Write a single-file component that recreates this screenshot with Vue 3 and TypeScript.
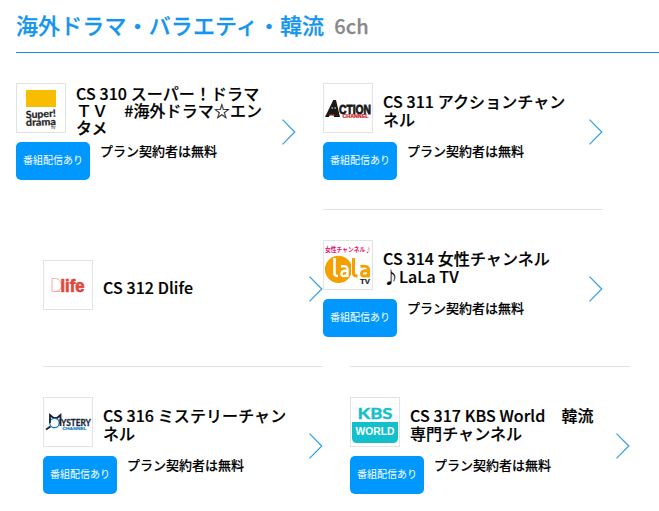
<script setup lang="ts">
type Logo = 'drama' | 'action' | 'dlife' | 'lala' | 'mystery' | 'kbs'

interface Channel {
  logo: Logo
  title: string
  streaming: boolean
}

const rows: { name: string; channels: Channel[] }[] = [
  {
    name: 'first',
    channels: [
      { logo: 'drama', title: 'CS 310 スーパー！ドラマＴＶ　#海外ドラマ☆エンタメ', streaming: true },
      { logo: 'action', title: 'CS 311 アクションチャンネル', streaming: true },
    ],
  },
  {
    name: 'second',
    channels: [
      { logo: 'dlife', title: 'CS 312 Dlife', streaming: false },
      { logo: 'lala', title: 'CS 314 女性チャンネル♪LaLa TV', streaming: true },
    ],
  },
  {
    name: 'third',
    channels: [
      { logo: 'mystery', title: 'CS 316 ミステリーチャンネル', streaming: true },
      { logo: 'kbs', title: 'CS 317 KBS World　韓流専門チャンネル', streaming: true },
    ],
  },
]
</script>

<template>
  <section class="genre">
    <h2 class="heading">海外ドラマ・バラエティ・韓流<span class="count">6ch</span></h2>
    <div v-for="row in rows" :key="row.name" class="row" :class="row.name">
      <a v-for="ch in row.channels" :key="ch.logo" class="card" :class="ch.logo">
        <div class="body">
          <div class="head">
            <div class="logo">
              <svg v-if="ch.logo === 'drama'" viewBox="0 0 48 48">
                <rect x="9" y="6" width="30" height="17" fill="#f9bd00" />
                <g class="round" fill="#222" stroke="#222" stroke-width=".25" font-size="10">
                  <text x="9" y="33.500" textLength="30" lengthAdjust="spacingAndGlyphs" transform="rotate(-3 24 33)">Super!</text>
                  <text x="9" y="41.500" textLength="30" lengthAdjust="spacingAndGlyphs" transform="rotate(-2 24 41)">drama</text>
                </g>
                <text class="round" x="34" y="44.500" font-size="3.500" fill="#222">TV</text>
              </svg>
              <svg v-else-if="ch.logo === 'action'" viewBox="0 0 48 48">
                <path d="M1 33 9.300 16h2.700L16 33h-6l-.5-2H6l-1.200 2z" fill="#191919" />
                <path d="M7.500 24h1.500m1.500 0H12" stroke="#fff" stroke-width="1.200" />
                <path d="M5.500 31h5" stroke="#d3222a" stroke-width="1.200" />
                <text class="bold-sans" x="15" y="29.500" font-size="12.200" textLength="32" lengthAdjust="spacingAndGlyphs" fill="#191919" stroke="#191919" stroke-width=".8">CTION</text>
                <text class="bold-sans" x="18.500" y="33.700" font-size="4.600" textLength="26" lengthAdjust="spacingAndGlyphs" fill="#d3222a" stroke="#d3222a" stroke-width=".2">CHANNEL</text>
              </svg>
              <svg v-else-if="ch.logo === 'dlife'" viewBox="0 0 48 48">
                <path d="M16.500 30.500H8v-13h3.500q6 1 6 6.500t-6 6.500" fill="none" stroke="#ef9a94" stroke-width=".8" />
                <text class="bold-sans" x="16.500" y="30.500" font-size="18" textLength="24" lengthAdjust="spacingAndGlyphs" fill="#e0483e" stroke="#e0483e" stroke-width=".7">life</text>
              </svg>
              <svg v-else-if="ch.logo === 'lala'" viewBox="0 0 48 48">
                <text class="jp" x="1" y="10.500" font-size="6.300" textLength="46" lengthAdjust="spacingAndGlyphs" fill="#e3186e">女性チャンネル♪</text>
                <circle cx="14.500" cy="28.300" r="13.600" fill="#f3a000" />
                <g fill="none" stroke-linejoin="round">
                  <path d="M10.500 17v15.500q0 2.500 3.500 2.500" stroke="#fff" stroke-width="2.600" />
                  <path d="M17 25.500q6.500-1.500 6.500 3V36M23.500 29.500q-6 0-6 3t3 2.500q3 0 3-3" stroke="#fff" stroke-width="2.400" />
                  <path d="M29.500 17v15.500q0 2.500 4 2.500" stroke="#fff" stroke-width="5" />
                  <path d="M29.500 17v15.500q0 2.500 4 2.500" stroke="#f3a000" stroke-width="3" />
                  <path d="M36.500 25.500q8-1.500 8 3V36.500M44.500 29.500q-7 0-7 3t3 2.500q4 0 4-3" stroke="#f3a000" stroke-width="2.900" />
                </g>
                <text class="bold-sans" x="36" y="43" font-size="6.500" textLength="10" lengthAdjust="spacingAndGlyphs" fill="#222" stroke="#222" stroke-width=".2">TV</text>
              </svg>
              <svg v-else-if="ch.logo === 'mystery'" viewBox="0 0 48 48">
                <path d="M6 25.500V17l3.500 3h3.500l3.500-3v11" fill="none" stroke="#162337" stroke-width="1.800" />
                <circle cx="10.500" cy="25" r="4.700" fill="#fff" stroke="#1873b8" stroke-width="1.200" />
                <path d="M6 21v4M16.300 21v5" stroke="#162337" stroke-width="1.500" />
                <path d="m6.500 28.500-4.500 3" stroke="#162337" stroke-width="1.700" />
                <text class="round" x="17" y="28" font-size="9.800" textLength="30" lengthAdjust="spacingAndGlyphs" fill="#162337" stroke="#162337" stroke-width=".3">YSTERY</text>
                <text class="bold-sans" x="18.500" y="32.200" font-size="4.400" textLength="24" lengthAdjust="spacingAndGlyphs" fill="#1d82c9" stroke="#1d82c9" stroke-width=".2">CHANNEL</text>
              </svg>
              <svg v-else viewBox="0 0 48 48">
                <text class="round" x="6.500" y="20.500" font-size="15" textLength="35" lengthAdjust="spacingAndGlyphs" fill="#12bfcd" stroke="#12bfcd" stroke-width=".4">KBS</text>
                <path d="M1 24h46v16q0 5-5 5H6q-5 0-5-5z" fill="#12bfcd" />
                <text class="bold-sans" x="4.500" y="36.500" font-size="10" textLength="39" lengthAdjust="spacingAndGlyphs" fill="#fff">WORLD</text>
              </svg>
            </div>
            <h3 class="title">{{ ch.title }}</h3>
          </div>
          <div v-if="ch.streaming" class="info">
            <span class="badge">番組配信あり</span>
            <span class="plan">プラン契約者は無料</span>
          </div>
        </div>
        <svg class="chevron" viewBox="0 0 14 26"><path d="m.5.700 12.300 12.300L.5 25.300" /></svg>
      </a>
    </div>
  </section>
</template>

<style>
body {
  background: #fff;
  overflow: hidden;
}
</style>

<style scoped>
.genre {
  box-sizing: border-box;
  height: 511px;
  padding-left: 16px;
  overflow: hidden;
  color: #000;
  font-family: 'Noto Sans CJK JP', 'Noto Sans', sans-serif;
  font-weight: 500;
}
.heading {
  box-sizing: border-box;
  height: 53px;
  margin: 0;
  padding-top: 8px;
  border-bottom: 1px solid #168ddd;
  color: #1495ef;
  font-size: 22px;
  font-weight: 500;
  letter-spacing: 0.11px;
  line-height: 32px;
  white-space: nowrap;
  -webkit-text-stroke: 0.25px;
}
.count {
  margin-left: 10px;
  color: #888;
  font-size: 20px;
}
.row {
  display: flex;
}
.first {
  height: 156px;
  gap: 27px;
}
.second {
  height: 157px;
  padding-left: 27px;
}
.third {
  height: 157px;
  padding-left: 27px;
  gap: 27px;
}
.card {
  box-sizing: border-box;
  display: flex;
  flex: none;
  justify-content: space-between;
  width: 280px;
  padding-top: 30px;
  border-top: 1px solid #e2e3e5;
}
.first .card {
  border-top: 0;
}
.card.dlife {
  border-top-color: transparent;
}
.dlife .body {
  padding-top: 20px;
}
.body {
  width: 252px;
}
.head {
  display: flex;
  align-items: center;
  height: 55px;
}
.logo {
  box-sizing: border-box;
  flex: none;
  align-self: flex-start;
  width: 50px;
  height: 50px;
  margin-right: 10px;
  border: 1px solid #e2e3e5;
}
.logo svg {
  display: block;
  width: 48px;
  height: 48px;
}
.title {
  margin: 0;
  font-size: 16px;
  font-weight: 500;
  letter-spacing: 0.08px;
  line-height: 17.2px;
  -webkit-text-stroke: 0.2px;
}
.info {
  display: flex;
  margin-top: 4px;
}
.badge {
  width: 74px;
  height: 38px;
  border-radius: 5px;
  background: #0098ff;
  color: #fff;
  font-size: 10px;
  font-weight: 400;
  line-height: 36px;
  text-align: center;
}
.plan {
  margin-left: 10px;
  font-size: 13px;
  line-height: 18px;
  -webkit-text-stroke: 0.15px;
}
.chevron {
  flex: none;
  width: 14px;
  height: 26px;
  margin-top: 36px;
  fill: none;
  stroke: #2f9fe8;
  stroke-width: 1.2;
}
.round {
  font-family: Lato, sans-serif;
  font-weight: 700;
}
.bold-sans {
  font-family: 'Liberation Sans', sans-serif;
  font-weight: 700;
}
.jp {
  font-weight: 700;
}
</style>
